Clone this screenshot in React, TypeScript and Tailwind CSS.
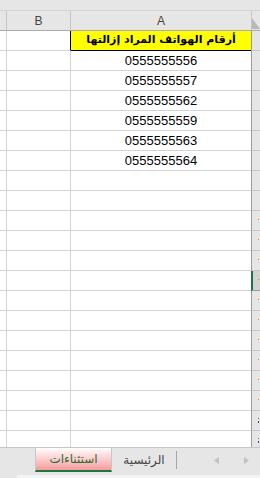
const phones = [
  "0555555556",
  "0555555557",
  "0555555562",
  "0555555559",
  "0555555563",
  "0555555564",
]

const arabic = "font-['DejaVu_Sans',sans-serif]"

function SheetRow({ n }: { n: number }) {
  const isTitle = n === 1
  const phone = phones[n - 2]
  const selected = n === 13

  return (
    <div className="flex h-[20px] shrink-0">
      <div className="w-[7px] border-r border-b border-[#d4d4d4]" />
      <div
        className={
          isTitle
            ? "w-[64px] border-b border-r border-b-[#d4d4d4] border-r-black"
            : "w-[64px] border-r border-b border-[#d4d4d4]"
        }
      />
      {isTitle ? (
        <div
          dir="rtl"
          className={`w-[180px] flex items-center justify-center bg-[#ffff00] border-b border-black text-[11px] font-bold text-black ${arabic}`}
        >
          أرقام الهواتف المراد إزالتها
        </div>
      ) : (
        <div className="w-[180px] flex items-end justify-center pb-[2px] border-b border-[#d4d4d4] text-[13px] leading-[15px] text-black">
          {phone ?? ""}
        </div>
      )}
      {/* row header: only the first pixel of two-digit numbers peeks in */}
      <div
        className={
          selected
            ? "w-[9px] flex flex-col items-end justify-center pr-[1px] border-l-2 border-l-[#217346] border-b border-b-[#9b9b9b] bg-[#d2d2d2]"
            : "w-[9px] flex flex-col items-end justify-center pr-[1px] border-l border-l-[#9b9b9b] border-b border-b-[#c6c6c6] bg-[#e6e6e6]"
        }
      >
        {n >= 20 ? (
          <>
            <span className="w-px h-px bg-[#8a6a3a]" />
            <span className="w-px h-[2px] mt-[2px] bg-[#3a3a6a]" />
          </>
        ) : n >= 10 ? (
          <span className="w-px h-px mb-[2px] bg-[#d98a3a]" />
        ) : null}
      </div>
    </div>
  )
}

export default function App() {
  const rows = Array.from({ length: 21 }, (_, i) => i + 1)

  return (
    <div className="w-[260px] h-[478px] flex flex-col overflow-hidden bg-white font-['Liberation_Sans',sans-serif]">
      <div className="h-[11px] shrink-0 bg-[#e6e6e6] border-b border-[#d4d4d4]" />

      {/* column headers */}
      <div className="flex h-[20px] shrink-0 bg-[#e6e6e6] border-b border-[#ababab] text-[12px] text-[#444]">
        <div className="w-[7px] border-r border-[#c6c6c6]" />
        <div className="w-[64px] border-r border-[#c6c6c6] flex items-center justify-center">
          B
        </div>
        <div className="w-[180px] flex items-center justify-center">A</div>
        <div className="w-[9px] border-l border-[#c6c6c6] flex items-end">
          <svg width="8" height="13" viewBox="0 0 8 13">
            <path d="M0 1 L0 12 L8 12 Z" fill="#b8b8b8" />
          </svg>
        </div>
      </div>

      {/* cells */}
      <div className="flex-1 flex flex-col overflow-hidden">
        {rows.map((n) => (
          <SheetRow key={n} n={n} />
        ))}
      </div>

      {/* sheet tabs */}
      <div className="h-[31px] shrink-0 flex flex-col bg-[#e6e6e6] border-t border-[#c6c6c6]">
        <div className={`flex h-[24px] ${arabic} text-[12px]`}>
          <div className="w-[35px]" />
          <div className="w-[77px] flex items-center justify-center border-l border-r border-[#c6c6c6] border-b-2 border-b-[#217346] bg-gradient-to-b from-white to-[#f29c9c] text-[#2a6b39]">
            استثناءات
          </div>
          <div className="w-[64px] flex items-center justify-center text-[#444]">
            الرئيسية
          </div>
          <div className="w-px my-[3px] bg-[#a6a6a6]" />
          <div className="flex-1 flex items-center justify-end gap-[25px] pr-[11px]">
            <svg width="5" height="7" viewBox="0 0 5 7">
              <path d="M5 0 L0 3.5 L5 7 Z" fill="#c2c2c2" />
            </svg>
            <svg width="5" height="7" viewBox="0 0 5 7">
              <path d="M0 0 L5 3.5 L0 7 Z" fill="#c2c2c2" />
            </svg>
          </div>
        </div>
        <div className="h-[3px]" />
        <div className="flex h-[3px]">
          <div className="w-[17px]" />
          <div className="flex-1 bg-[#f3f3f3]" />
        </div>
      </div>
    </div>
  )
}
